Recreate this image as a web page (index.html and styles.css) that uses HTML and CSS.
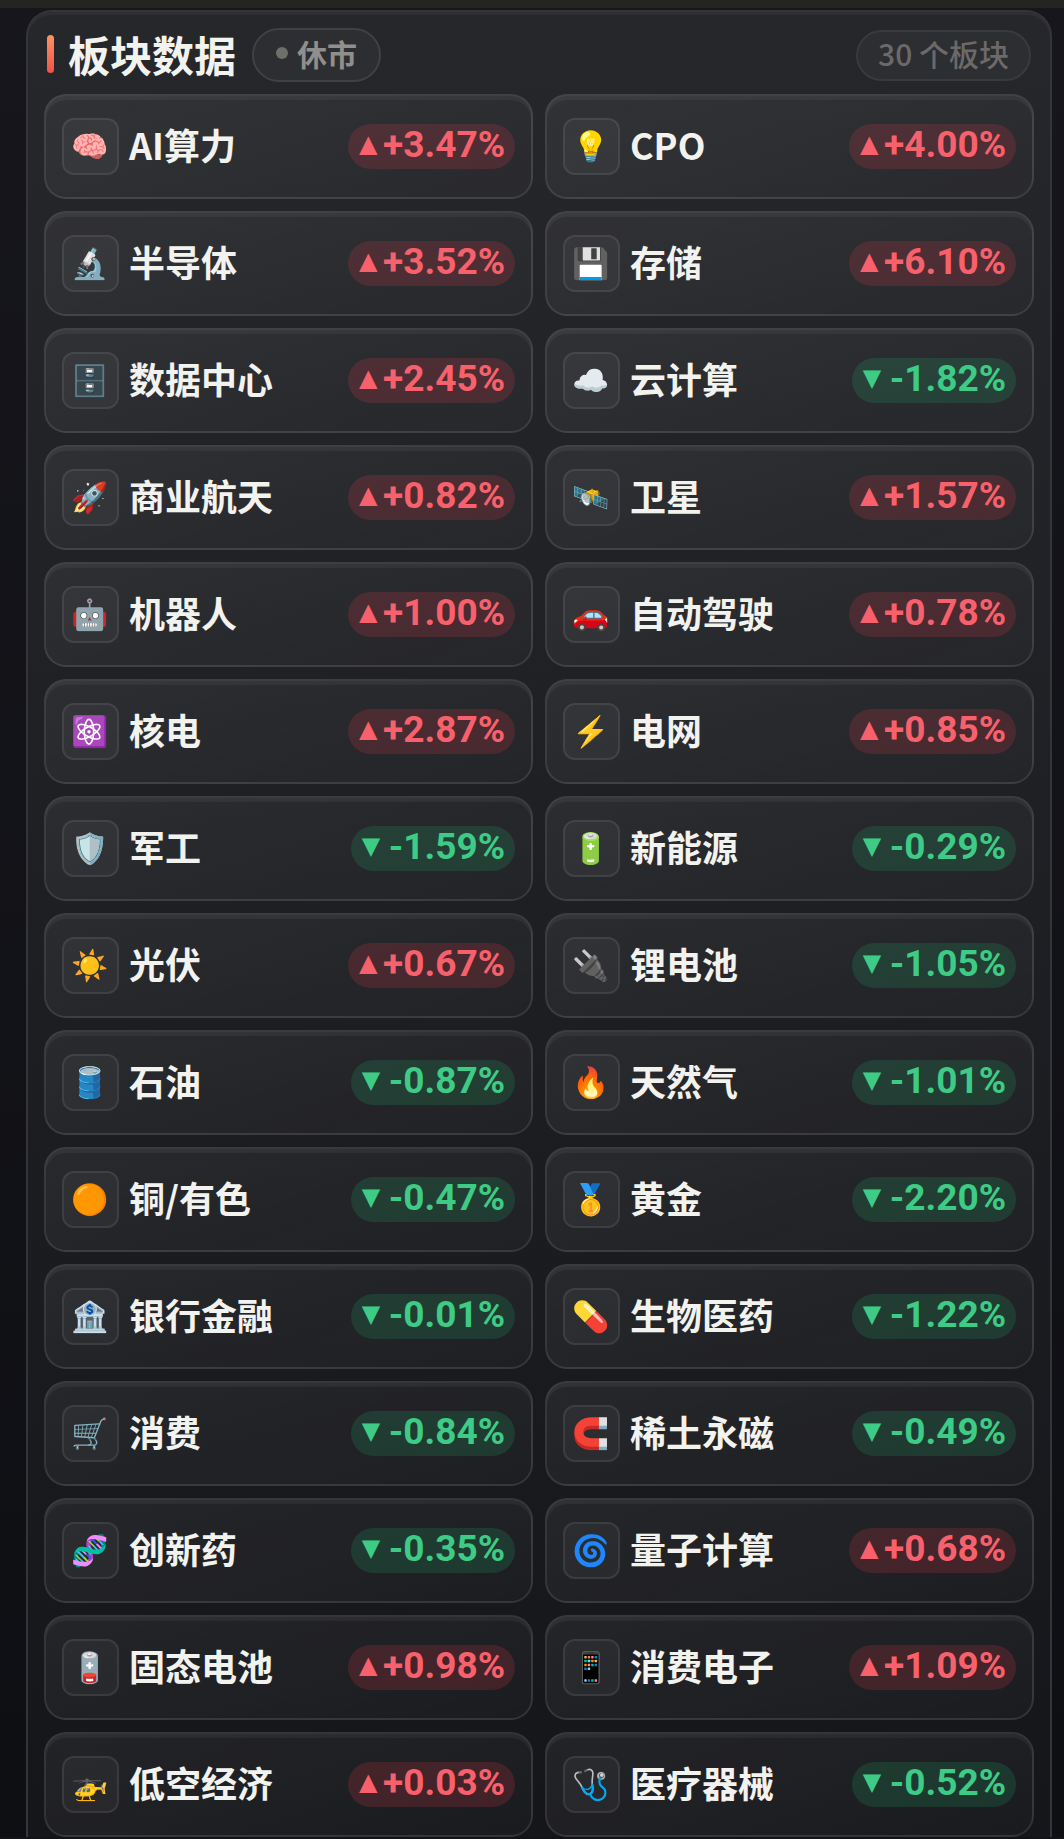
FILE: index.html
```
<!DOCTYPE html>
<html lang="zh-CN">

<head>
    <meta charset="UTF-8">
    <meta name="viewport" content="width=device-width, initial-scale=1.0">
    <title>板块数据</title>
    <link rel="stylesheet" href="styles.css">
</head>

<body>
    <main class="panel">
        <!-- Header -->
        <header class="header">
            <h1>板块数据</h1>
            <span class="status">休市</span>
            <span class="count">30 个板块</span>
        </header>

        <!-- Sector cards -->
        <ul class="sectors">
            <li class="card"><span class="icon">🧠</span><span class="name">AI算力</span><span class="change up">+3.47%</span></li>
            <li class="card"><span class="icon">💡</span><span class="name">CPO</span><span class="change up">+4.00%</span></li>
            <li class="card"><span class="icon">🔬</span><span class="name">半导体</span><span class="change up">+3.52%</span></li>
            <li class="card"><span class="icon">💾</span><span class="name">存储</span><span class="change up">+6.10%</span></li>
            <li class="card"><span class="icon">🗄️</span><span class="name">数据中心</span><span class="change up">+2.45%</span></li>
            <li class="card"><span class="icon">☁️</span><span class="name">云计算</span><span class="change down">-1.82%</span></li>
            <li class="card"><span class="icon">🚀</span><span class="name">商业航天</span><span class="change up">+0.82%</span></li>
            <li class="card"><span class="icon">🛰️</span><span class="name">卫星</span><span class="change up">+1.57%</span></li>
            <li class="card"><span class="icon">🤖</span><span class="name">机器人</span><span class="change up">+1.00%</span></li>
            <li class="card"><span class="icon">🚗</span><span class="name">自动驾驶</span><span class="change up">+0.78%</span></li>
            <li class="card"><span class="icon">⚛️</span><span class="name">核电</span><span class="change up">+2.87%</span></li>
            <li class="card"><span class="icon">⚡</span><span class="name">电网</span><span class="change up">+0.85%</span></li>
            <li class="card"><span class="icon">🛡️</span><span class="name">军工</span><span class="change down">-1.59%</span></li>
            <li class="card"><span class="icon">🔋</span><span class="name">新能源</span><span class="change down">-0.29%</span></li>
            <li class="card"><span class="icon">☀️</span><span class="name">光伏</span><span class="change up">+0.67%</span></li>
            <li class="card"><span class="icon">🔌</span><span class="name">锂电池</span><span class="change down">-1.05%</span></li>
            <li class="card"><span class="icon">🛢️</span><span class="name">石油</span><span class="change down">-0.87%</span></li>
            <li class="card"><span class="icon">🔥</span><span class="name">天然气</span><span class="change down">-1.01%</span></li>
            <li class="card"><span class="icon">🟠</span><span class="name">铜/有色</span><span class="change down">-0.47%</span></li>
            <li class="card"><span class="icon">🥇</span><span class="name">黄金</span><span class="change down">-2.20%</span></li>
            <li class="card"><span class="icon">🏦</span><span class="name">银行金融</span><span class="change down">-0.01%</span></li>
            <li class="card"><span class="icon">💊</span><span class="name">生物医药</span><span class="change down">-1.22%</span></li>
            <li class="card"><span class="icon">🛒</span><span class="name">消费</span><span class="change down">-0.84%</span></li>
            <li class="card"><span class="icon">🧲</span><span class="name">稀土永磁</span><span class="change down">-0.49%</span></li>
            <li class="card"><span class="icon">🧬</span><span class="name">创新药</span><span class="change down">-0.35%</span></li>
            <li class="card"><span class="icon">🌀</span><span class="name">量子计算</span><span class="change up">+0.68%</span></li>
            <li class="card"><span class="icon">🪫</span><span class="name">固态电池</span><span class="change up">+0.98%</span></li>
            <li class="card"><span class="icon">📱</span><span class="name">消费电子</span><span class="change up">+1.09%</span></li>
            <li class="card"><span class="icon">🚁</span><span class="name">低空经济</span><span class="change up">+0.03%</span></li>
            <li class="card"><span class="icon">🩺</span><span class="name">医疗器械</span><span class="change down">-0.52%</span></li>
        </ul>
    </main>
</body>

</html>
```
FILE: styles.css
```
* {
    box-sizing: border-box;
}

html {
    background-color: #121318;
}

body {
    margin: 0;
    padding: 2px 12px 0 26px;
    border-top: 8px solid #242421;
    background: linear-gradient(#16161c, #0e0f13);
    color: #f2f2ef;
    font-family: "Noto Sans CJK SC", sans-serif;
}

.panel {
    padding: 16px 16px 0;
    border: 2px solid #34353a;
    border-bottom: none;
    border-radius: 26px 26px 0 0;
    background: linear-gradient(#26272b, #1d1e22 55%, #15161a);
    box-shadow: inset 0 3px 0 #2f2f31;
}

.header {
    display: flex;
    align-items: center;
    margin-bottom: 12px;
    padding: 0 3px;
}

.header h1 {
    display: flex;
    align-items: center;
    gap: 14px;
    margin: 0 16px 0 0;
    padding-bottom: 2px;
    font-size: 42px;
    line-height: 48px;
}

.header h1::before {
    content: "";
    width: 7px;
    height: 38px;
    border-radius: 4px;
    background: linear-gradient(#fb9468, #ee5348);
}

.status,
.count {
    display: flex;
    align-items: center;
    border: 2px solid #404145;
    border-radius: 27px;
    background-color: #2d2e32;
    font-size: 30px;
    line-height: 44px;
}

.status {
    gap: 9px;
    height: 54px;
    padding: 0 22px 4px;
    color: #908f8c;
    font-weight: bold;
}

.status::before {
    content: "";
    width: 12px;
    height: 12px;
    border-radius: 50%;
    background-color: #6e6e6a;
}

.count {
    height: 51px;
    margin-left: auto;
    padding: 0 20px 4px;
    border-color: #393a3e;
    color: #6c6968;
    font-weight: 500;
}

.sectors {
    display: grid;
    grid-template-columns: 1fr 1fr;
    gap: 12px;
    margin: 0;
    padding: 0;
    list-style: none;
}

.card {
    display: flex;
    align-items: center;
    height: 105px;
    padding: 0 16px;
    border: 2px solid rgba(255, 255, 255, 0.1);
    border-radius: 22px;
    background: linear-gradient(160deg, rgba(255, 255, 255, 0.06), rgba(255, 255, 255, 0.025));
    box-shadow: inset 0 4px 1px rgba(255, 255, 255, 0.05);
}

.icon {
    display: flex;
    align-items: center;
    justify-content: center;
    width: 57px;
    height: 57px;
    margin-right: 10px;
    border: 2px solid rgba(255, 255, 255, 0.08);
    border-radius: 12px;
    background-color: rgba(255, 255, 255, 0.04);
    font-family: "Noto Color Emoji", sans-serif;
    font-size: 30px;
    line-height: 34px;
}

.name {
    padding-bottom: 6px;
    font-size: 36px;
    font-weight: bold;
    line-height: 48px;
}

.change {
    display: flex;
    align-items: center;
    gap: 6px;
    margin-left: auto;
    padding: 0 10px 4px 11px;
    border-radius: 23px;
    font-family: Roboto, sans-serif;
    font-size: 37px;
    font-weight: bold;
    line-height: 41px;
}

.change::before {
    width: 18px;
    font-family: "DejaVu Sans", sans-serif;
    font-size: 24px;
}

.up {
    background-color: rgba(255, 60, 80, 0.16);
    color: #f8616b;
}

.up::before {
    content: "▲";
}

.down {
    gap: 9px;
    background-color: rgba(30, 200, 120, 0.16);
    color: #3ecb85;
}

.down::before {
    content: "▼";
}
```
